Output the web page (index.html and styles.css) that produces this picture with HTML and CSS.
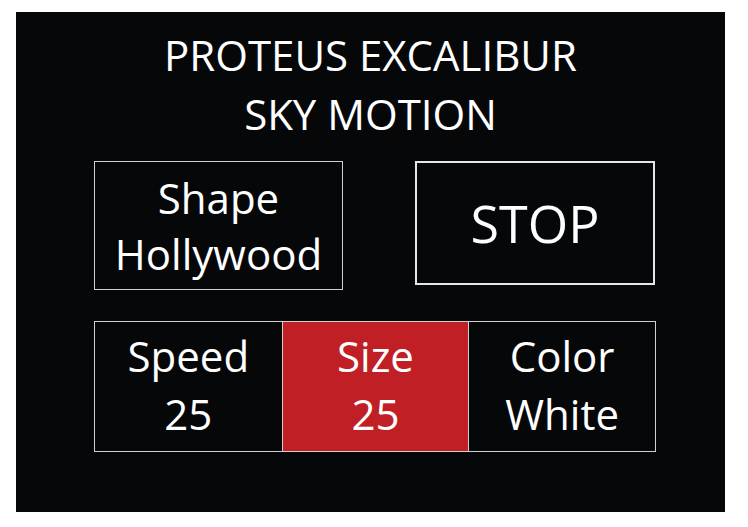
FILE: index.html
```html
<!DOCTYPE html>
<html lang="en">
<head>
<meta charset="utf-8">
<title>Proteus Excalibur Sky Motion</title>
<link rel="stylesheet" href="styles.css">
</head>
<body>
<main class="panel">
  <h1 class="title">PROTEUS EXCALIBUR<br>SKY MOTION</h1>
  <div class="top-row">
    <div class="box shape">Shape<br>Hollywood</div>
    <div class="box stop">STOP</div>
  </div>
  <div class="settings">
    <div class="cell">Speed<br>25</div>
    <div class="cell active">Size<br>25</div>
    <div class="cell">Color<br>White</div>
  </div>
</main>
</body>
</html>
```
FILE: styles.css
```css
html, body {
  margin: 0;
  background: #ffffff;
}

.panel {
  box-sizing: border-box;
  width: 709px;
  height: 500px;
  margin: 12px 0 0 16px;
  padding: 13px 70px 0 78px;
  background: #060709;
  color: #ffffff;
  font-family: "Open Sans", "Liberation Sans", sans-serif;
  display: flex;
  flex-direction: column;
}

.title {
  margin: 0 0 0 -8px;
  font-size: 42px;
  font-weight: 400;
  line-height: 59px;
  text-align: center;
}

.top-row {
  margin-top: 18px;
  display: flex;
  justify-content: space-between;
  align-items: flex-start;
}

.box {
  box-sizing: border-box;
  display: flex;
  align-items: center;
  justify-content: center;
  text-align: center;
}

.shape {
  width: 249px;
  height: 129px;
  border: 1px solid #cfcfcf;
  font-size: 42px;
  line-height: 56px;
}

.stop {
  width: 240px;
  height: 124px;
  border: 2px solid #e6e6e6;
  font-size: 52px;
  line-height: 60px;
}

.settings {
  margin-top: 31px;
  margin-right: -1px;
  display: grid;
  grid-template-columns: repeat(3, 1fr);
  height: 131px;
  border: 1px solid #cfcfcf;
  box-sizing: border-box;
}

.cell {
  display: flex;
  align-items: center;
  justify-content: center;
  text-align: center;
  font-size: 42px;
  line-height: 58px;
  padding-bottom: 4px;
}

.cell + .cell {
  border-left: 1px solid #cfcfcf;
}

.cell.active {
  background: #c01f25;
}
```
